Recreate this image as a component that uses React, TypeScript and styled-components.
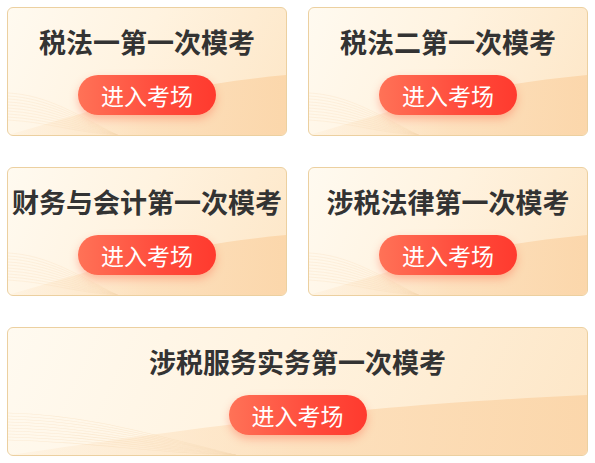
import React from "react";
import styled, { createGlobalStyle } from "styled-components";

const GlobalStyle = createGlobalStyle`
  body {
    margin: 0;
    background: #fff;
    font-family: "Noto Sans CJK SC", "Noto Sans", sans-serif;
  }
`;

const Page = styled.div`
  display: grid;
  grid-template-columns: 1fr 1fr;
  column-gap: 21px;
  row-gap: 31px;
  padding: 7px;
  width: 595px;
  box-sizing: border-box;
`;

const Card = styled.div<{ $wide?: boolean }>`
  position: relative;
  overflow: hidden;
  grid-column: ${(p) => (p.$wide ? "1 / span 2" : "auto")};
  height: 129px;
  box-sizing: border-box;
  border: 1px solid #ecd0a0;
  border-radius: 6px;
  background: linear-gradient(115deg, #fffaf0 0%, #fff3e0 45%, #fde6c6 100%);
  display: flex;
  flex-direction: column;
  align-items: center;
`;

const Wave = styled.svg`
  position: absolute;
  left: 0;
  bottom: 0;
  width: 100%;
  height: 80px;
`;

const Title = styled.div`
  position: relative;
  margin-top: 17px;
  font-size: 27px;
  line-height: 34px;
  font-weight: 700;
  color: #333;
  white-space: nowrap;
`;

const EnterButton = styled.button`
  position: relative;
  margin-top: 16px;
  width: 138px;
  height: 40px;
  border: none;
  border-radius: 20px;
  background: linear-gradient(90deg, #ff7257 0%, #ff4b3c 60%, #ff3a2e 100%);
  box-shadow: 0 4px 9px rgba(255, 90, 60, 0.35);
  color: #fff;
  font-family: "Noto Sans CJK SC", "Noto Sans", sans-serif;
  font-size: 23px;
  line-height: 40px;
  padding: 0;
  cursor: pointer;
`;

const Decoration = () => (
  <Wave viewBox="0 0 280 80" preserveAspectRatio="none">
    <defs>
      <linearGradient id="wv" x1="0" y1="0" x2="1" y2="0">
        <stop offset="0" stopColor="#fde3c2" stopOpacity="0.2" />
        <stop offset="0.5" stopColor="#fcdab2" stopOpacity="0.7" />
        <stop offset="1" stopColor="#fbd5a8" stopOpacity="0.9" />
      </linearGradient>
    </defs>
    <path d="M0 80 C70 60 150 32 280 20 L280 80 Z" fill="url(#wv)" />
    {Array.from({ length: 10 }).map((_, i) => (
      <path
        key={i}
        d={`M0 ${38 + i * 3} C40 ${40 + i * 3} 70 ${60 + i * 2} 110 80`}
        stroke="#f6d9b4"
        strokeOpacity="0.45"
        strokeWidth="0.6"
        fill="none"
      />
    ))}
  </Wave>
);

const exams = [
  "税法一第一次模考",
  "税法二第一次模考",
  "财务与会计第一次模考",
  "涉税法律第一次模考",
  "涉税服务实务第一次模考",
];

const App = () => (
  <>
    <GlobalStyle />
    <Page>
      {exams.map((name, i) => (
        <Card key={name} $wide={i === exams.length - 1}>
          <Decoration />
          <Title>{name}</Title>
          <EnterButton>进入考场</EnterButton>
        </Card>
      ))}
    </Page>
  </>
);

export default App;
